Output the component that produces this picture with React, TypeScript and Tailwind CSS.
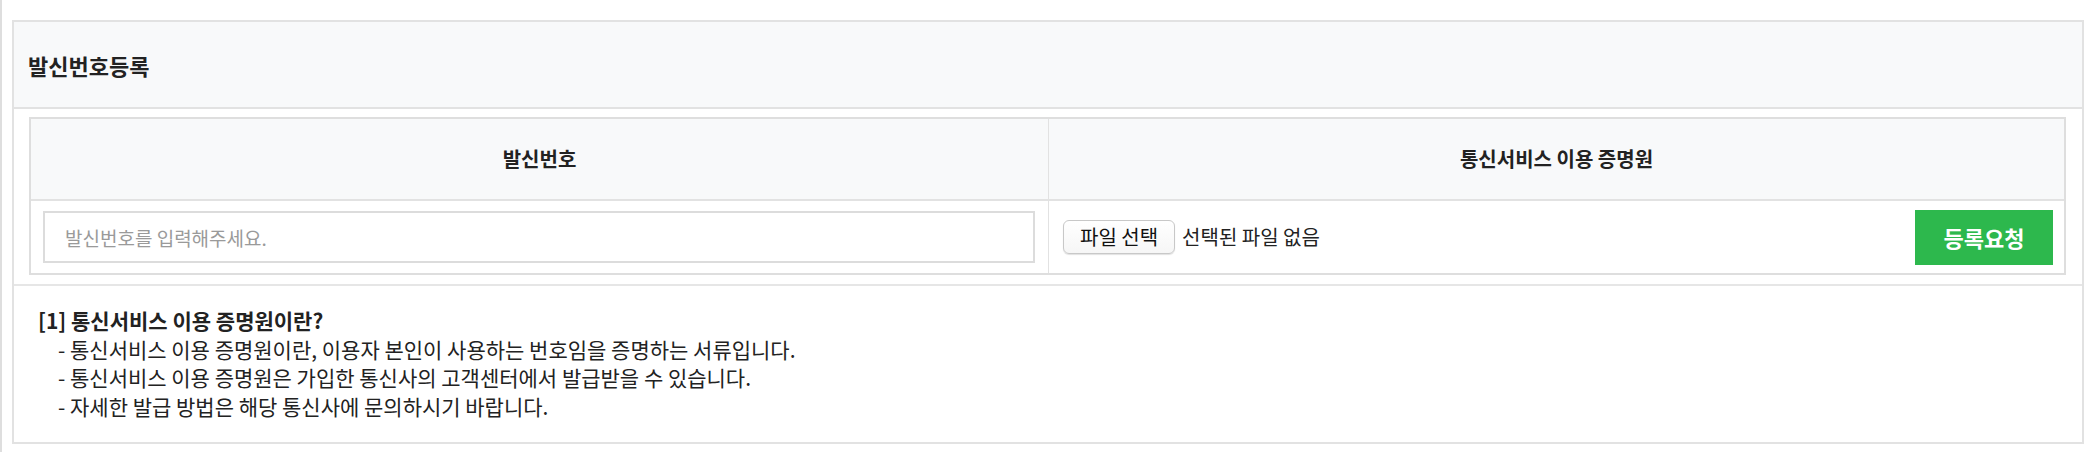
import React from 'react';

const notes = [
  '- 통신서비스 이용 증명원이란, 이용자 본인이 사용하는 번호임을 증명하는 서류입니다.',
  '- 통신서비스 이용 증명원은 가입한 통신사의 고객센터에서 발급받을 수 있습니다.',
  '- 자세한 발급 방법은 해당 통신사에 문의하시기 바랍니다.',
];

const App: React.FC = () => {
  return (
    <div className="h-[452px] w-full bg-white border-l-2 border-[#dedede] pt-[20px] pl-[10px] pr-[6px] font-['Noto_Sans_CJK_KR','Noto_Sans',sans-serif] text-[#222]">
      <section className="border-2 border-[#e2e2e2]">
        {/* Panel header */}
        <div className="h-[87px] flex items-center pl-[14px] bg-[#f8f9fa] border-b-2 border-[#e2e2e2]">
          <h2 className="text-[22px] font-bold leading-none">발신번호등록</h2>
        </div>

        {/* Registration table */}
        <div className="pt-[8px] pb-[9px] pl-[15px] pr-[16px] border-b-2 border-[#e6e6e6]">
          <div className="border-2 border-[#dedede]">
            <div className="grid grid-cols-[1018px_1fr] h-[82px] bg-[#f8f9fa] border-b-2 border-[#e2e2e2]">
              <div className="flex items-center justify-center border-r border-[#e2e2e2] text-[20px] font-bold">
                발신번호
              </div>
              <div className="flex items-center justify-center text-[20px] font-bold">
                통신서비스 이용 증명원
              </div>
            </div>
            <div className="grid grid-cols-[1018px_1fr] h-[72px]">
              <div className="flex items-center pl-[12px] pr-[13px] border-r border-[#e2e2e2]">
                <input
                  type="text"
                  placeholder="발신번호를 입력해주세요."
                  className="w-full h-[52px] border-2 border-[#dcdcdc] px-[20px] text-[19px] outline-none placeholder:text-[#9a9a9a]"
                />
              </div>
              <div className="flex items-center pl-[14px] pr-[11px]">
                <button className="h-[34px] px-[16px] rounded-[6px] border border-[#c8c8c8] bg-gradient-to-b from-white to-[#f6f6f6] shadow-[0_1px_1px_rgba(0,0,0,0.12)] text-[20px] leading-none text-[#111]">
                  파일 선택
                </button>
                <span className="ml-[7px] text-[20px] leading-none text-[#222]">선택된 파일 없음</span>
                <button className="ml-auto w-[138px] h-[55px] bg-[#2db84d] text-white text-[22px] font-bold leading-none">
                  등록요청
                </button>
              </div>
            </div>
          </div>
        </div>

        {/* Notes */}
        <div className="pt-[20px] pb-[22px] pl-[24px] text-[21px] leading-[28.5px] text-[#222]">
          <p className="font-bold">[1] 통신서비스 이용 증명원이란?</p>
          {notes.map((n) => (
            <p key={n} className="pl-[20px]">
              {n}
            </p>
          ))}
        </div>
      </section>
    </div>
  );
};

export default App;
